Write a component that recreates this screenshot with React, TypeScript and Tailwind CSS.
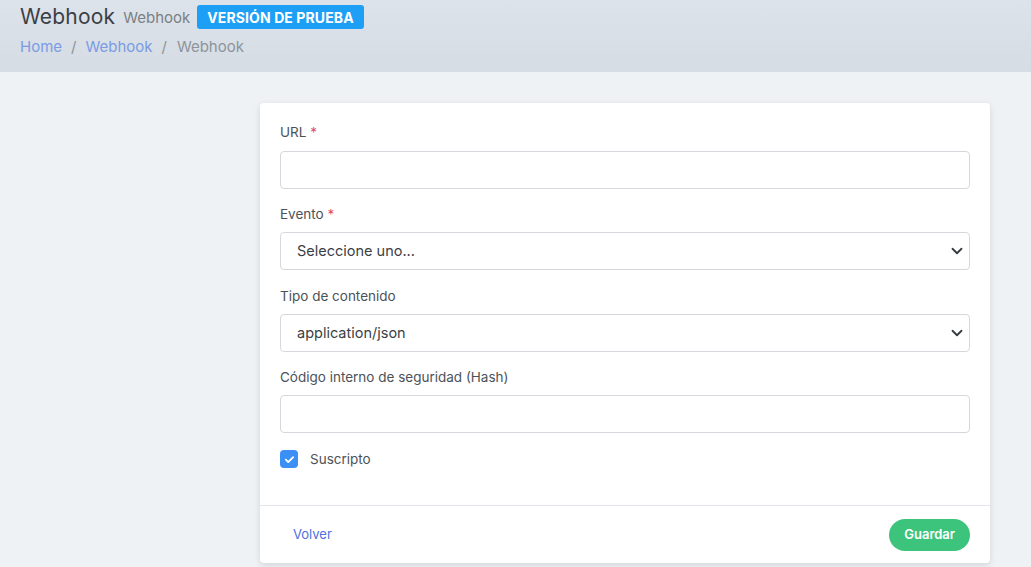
import React from "react";

const font = { fontFamily: "Inter, 'Noto Sans', sans-serif" };

function Chevron() {
  return (
    <svg width="12" height="12" viewBox="0 0 16 16" className="absolute right-[6px] top-1/2 -translate-y-1/2">
      <path d="M2 5l6 6 6-6" fill="none" stroke="#343a40" strokeWidth="2.4" strokeLinecap="round" strokeLinejoin="round" />
    </svg>
  );
}

export default function App() {
  return (
    <div className="w-[1031px] h-[567px] overflow-hidden bg-[#eef2f5]" style={font}>
      <div className="h-[72px] bg-gradient-to-b from-[#dde3ea] to-[#d5dce3] pl-[20px] pt-[4px]">
        <div className="flex items-center h-[26px]">
          <span className="text-[21px] text-[#3b3f45] tracking-[0.2px]">Webhook</span>
          <span className="ml-[8px] text-[15px] text-[#7a7f85] mt-[2px]">Webhook</span>
          <span className="ml-[7px] h-[24px] px-[10px] rounded-[3px] bg-[#1c9ff5] text-white font-bold text-[14px] flex items-center tracking-[0.1px]">VERSIÓN DE PRUEBA</span>
        </div>
        <div className="flex items-center text-[15px] leading-[20px] mt-[7px]">
          <span className="text-[#7a9be3]">Home</span>
          <span className="mx-[9px] text-[#8d949b]">/</span>
          <span className="text-[#7a9be3]">Webhook</span>
          <span className="mx-[9px] text-[#8d949b]">/</span>
          <span className="ml-[1px] text-[#8d949b]">Webhook</span>
        </div>
      </div>
      <div className="pl-[260px] pt-[31px]">
        <div className="w-[730px] bg-white rounded-[4px] shadow-[0_2px_6px_rgba(0,0,0,0.12)]">
          <div className="px-[20px] pt-[19px] pb-[37px]">
            <div className="text-[13.5px] leading-[20px] text-[#4c5258]">URL <span className="text-[#e04b6a]">*</span></div>
            <div className="mt-[9px] h-[38px] border border-[#d4d8dd] rounded-[4px]" />
            <div className="mt-[15px] text-[13.5px] leading-[20px] text-[#4c5258]">Evento <span className="text-[#e04b6a]">*</span></div>
            <div className="relative mt-[8px] h-[38px] border border-[#d4d8dd] rounded-[4px] flex items-center pl-[16px] text-[14.5px] text-[#3b3f45]">
              Seleccione uno...
              <Chevron />
            </div>
            <div className="mt-[16px] text-[13.5px] leading-[20px] text-[#4c5258]">Tipo de contenido</div>
            <div className="relative mt-[8px] h-[38px] border border-[#d4d8dd] rounded-[4px] flex items-center pl-[16px] text-[14.5px] text-[#3b3f45]">
              application/json
              <Chevron />
            </div>
            <div className="mt-[15px] text-[13.5px] leading-[20px] text-[#4c5258]">Código interno de seguridad (Hash)</div>
            <div className="mt-[8px] h-[38px] border border-[#d4d8dd] rounded-[4px]" />
            <div className="mt-[17px] flex items-center h-[18px]">
              <div className="w-[18px] h-[18px] rounded-[4px] bg-[#3b8ff5] flex items-center justify-center">
                <svg width="11" height="11" viewBox="0 0 12 12">
                  <path d="M2 6.2l2.6 2.6L10 3.4" fill="none" stroke="white" strokeWidth="2" strokeLinecap="round" strokeLinejoin="round" />
                </svg>
              </div>
              <span className="ml-[12px] text-[13.5px] text-[#4c5258]">Suscripto</span>
            </div>
          </div>
          <div className="border-t border-[#e3e5ea] h-[58px] flex items-center justify-between pl-[33px] pr-[20px]">
            <span className="text-[13px] text-[#4d6fe0]">Volver</span>
            <span className="h-[32px] px-[15px] rounded-full bg-[#3cc47c] text-white text-[13px] font-semibold flex items-center">Guardar</span>
          </div>
        </div>
      </div>
    </div>
  );
}
